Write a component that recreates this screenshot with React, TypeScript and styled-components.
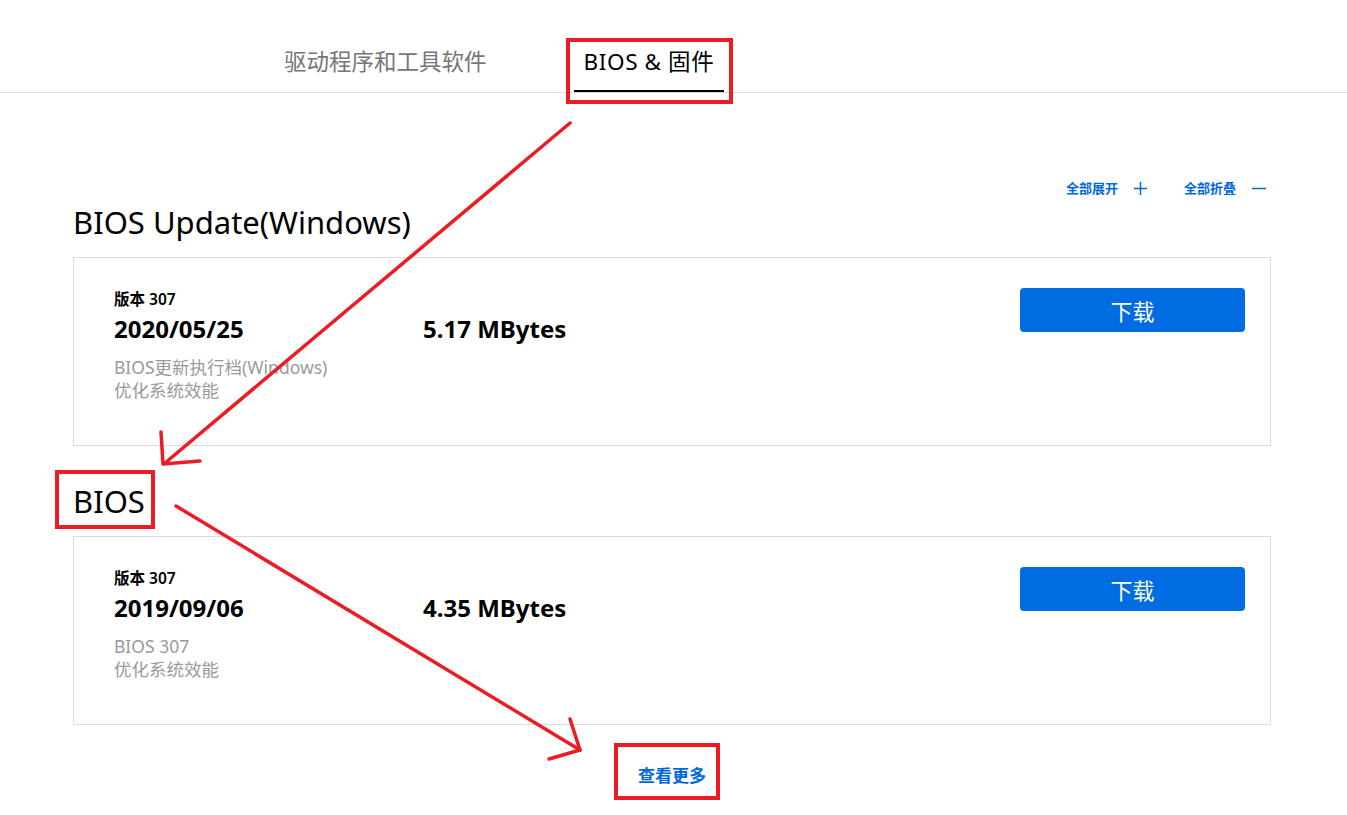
import styled, { createGlobalStyle } from 'styled-components';

const GlobalStyle = createGlobalStyle`
  html, body {
    margin: 0;
    padding: 0;
    background: #fff;
  }
  body {
    font-family: "Noto Sans", "Noto Sans CJK SC", sans-serif;
    color: #000;
  }
`;

const Page = styled.div`
  position: relative;
  width: 1347px;
  min-height: 815px;
  overflow: hidden;
`;

const TabBar = styled.div`
  display: flex;
  gap: 77px;
  height: 92px;
  padding-left: 274px;
  border-bottom: 1px solid #dedede;
`;

const Tab = styled.div<{ active?: boolean }>`
  display: flex;
  align-items: flex-end;
  padding: 0 10px 13px;
  font-size: 22.5px;
  line-height: 30px;
  letter-spacing: ${({ active }) => (active ? '0.6px' : '0')};
  color: ${({ active }) => (active ? '#000' : '#767676')};
  border-bottom: 2px solid ${({ active }) => (active ? '#000' : 'transparent')};
`;

const Content = styled.div`
  margin: 0 76px 0 73px;
`;

const Toolbar = styled.div`
  display: flex;
  justify-content: flex-end;
  gap: 37px;
  margin-top: 85px;
  padding-right: 5px;
`;

const ToolLink = styled.span`
  display: flex;
  align-items: center;
  gap: 16px;
  font-size: 13px;
  line-height: 20px;
  font-weight: 700;
  color: #0068de;
`;

const Heading = styled.h2<{ gap: number }>`
  margin: ${({ gap }) => gap}px 0 15px;
  font-size: 31px;
  line-height: 40px;
  font-weight: 400;
`;

const Card = styled.div`
  display: flex;
  justify-content: space-between;
  height: 187px;
  border: 1px solid #dcdcdc;
`;

const Info = styled.div`
  padding: 31px 0 0 40px;
`;

const Version = styled.div`
  font-size: 15.5px;
  line-height: 20px;
  font-weight: 600;
`;

const MainRow = styled.div`
  display: grid;
  grid-template-columns: 309px auto;
  margin-top: 6px;
  font-size: 24px;
  line-height: 28px;
  font-weight: 700;
`;

const Desc = styled.div`
  margin-top: 13px;
  font-size: 17.5px;
  line-height: 23px;
  color: #9a9a9a;
`;

const DownloadButton = styled.button`
  width: 225px;
  height: 44px;
  margin: 30px 25px 0 0;
  border: none;
  border-radius: 4px;
  background: #006ce1;
  color: #fff;
  font-family: inherit;
  font-size: 22px;
`;

const MoreLink = styled.div`
  margin-top: 40px;
  text-align: center;
  font-size: 17px;
  line-height: 22px;
  font-weight: 700;
  color: #0068de;
`;

const Annotations = styled.svg`
  position: absolute;
  inset: 0;
  pointer-events: none;
`;

interface IRelease {
  version: string;
  date: string;
  size: string;
  lines: string[];
}

const ReleaseCard = ({ version, date, size, lines }: IRelease) => (
  <Card>
    <Info>
      <Version>{version}</Version>
      <MainRow>
        <span>{date}</span>
        <span>{size}</span>
      </MainRow>
      <Desc>
        {lines.map(line => (
          <div key={line}>{line}</div>
        ))}
      </Desc>
    </Info>
    <DownloadButton>下载</DownloadButton>
  </Card>
);

const Plus = () => (
  <svg width="13" height="13" viewBox="0 0 13 13">
    <path d="M6.5 0v13M0 6.5h13" stroke="#0068de" strokeWidth="1.5" />
  </svg>
);

const Minus = () => (
  <svg width="14" height="13" viewBox="0 0 14 13">
    <path d="M0 6.5h14" stroke="#0068de" strokeWidth="1.5" />
  </svg>
);

export default function App() {
  return (
    <Page>
      <GlobalStyle />
      <TabBar>
        <Tab>驱动程序和工具软件</Tab>
        <Tab active>BIOS &amp; 固件</Tab>
      </TabBar>
      <Content>
        <Toolbar>
          <ToolLink>
            全部展开
            <Plus />
          </ToolLink>
          <ToolLink>
            全部折叠
            <Minus />
          </ToolLink>
        </Toolbar>
        <Heading gap={4}>BIOS Update(Windows)</Heading>
        <ReleaseCard
          version="版本 307"
          date="2020/05/25"
          size="5.17 MBytes"
          lines={['BIOS更新执行档(Windows)', '优化系统效能']}
        />
        <Heading gap={35}>BIOS</Heading>
        <ReleaseCard
          version="版本 307"
          date="2019/09/06"
          size="4.35 MBytes"
          lines={['BIOS 307', '优化系统效能']}
        />
        <MoreLink>查看更多</MoreLink>
      </Content>

      <Annotations width="1347" height="815" viewBox="0 0 1347 815">
        <g fill="none" stroke="#ed1c24" strokeWidth="4">
          <rect x="568" y="40" width="163" height="62" />
          <rect x="57" y="472" width="96" height="55" />
          <rect x="616" y="745" width="102" height="53" />
        </g>
        <g fill="none" stroke="#ed1c24" strokeWidth="3.5" strokeLinecap="round" strokeLinejoin="round">
          <path d="M570 123 L165 463" />
          <path d="M161 432 L163 464 L200 461" />
          <path d="M176 506 L580 750" />
          <path d="M570 719 L580 750 L549 759" />
        </g>
      </Annotations>
    </Page>
  );
}
